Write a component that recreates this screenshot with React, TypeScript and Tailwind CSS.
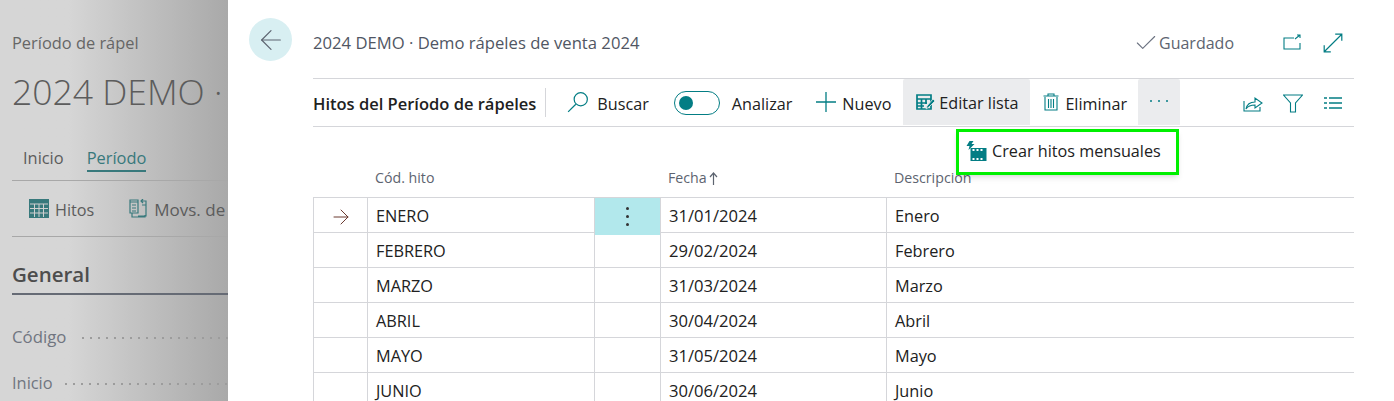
import { ReactNode } from 'react'
import { ArrowLeft, ArrowRight, Check } from 'lucide-react'

const TEAL = '#037d84'

const rows = [
  ['ENERO', '31/01/2024', 'Enero'],
  ['FEBRERO', '29/02/2024', 'Febrero'],
  ['MARZO', '31/03/2024', 'Marzo'],
  ['ABRIL', '30/04/2024', 'Abril'],
  ['MAYO', '31/05/2024', 'Mayo'],
  ['JUNIO', '30/06/2024', 'Junio'],
]

function Icon({ size = 20, children }: { size?: number; children: ReactNode }) {
  return (
    <svg width={size} height={size} viewBox="0 0 20 20" fill="none" stroke={TEAL} strokeWidth="1.1" className="shrink-0">
      {children}
    </svg>
  )
}

function Dots() {
  return <div className="flex-1 h-[4px] mt-[2px] bg-[radial-gradient(circle,#9c9c9c_1px,transparent_1.2px)] bg-[length:8px_4px]" />
}

function Label({ children, className = '' }: { children: ReactNode; className?: string }) {
  return <span className={`pt-[3px] ${className}`}>{children}</span>
}

function LeftPanel() {
  return (
    <div className="w-[228px] h-[401px] shrink-0 overflow-hidden bg-gradient-to-r from-[#d6d6d6] from-30% to-[#a9a9a9] text-[#5c5c5c]">
      <div className="pl-3 pt-[31px] text-[16.4px] leading-[24px] text-[#666]">Período de rápel</div>
      <div className="pl-3 pt-[12px] text-[35.500px] leading-[48px] font-light whitespace-nowrap">2024 DEMO ·</div>
      <div className="ml-3 mt-[24px] h-[42px] flex gap-[23px] pl-[11px] border-b border-[#a8a8a8] text-[16.4px] leading-[38px]">
        <span>Inicio</span>
        <span className="h-[31px] text-[#38797c] border-b-2 border-[#38797c] box-content leading-[38px]">Período</span>
      </div>
      <div className="ml-3 h-[56px] flex items-center gap-[35px] pl-[17px] border-b border-[#a8a8a8] text-[16.2px] whitespace-nowrap">
        <span className="flex items-center gap-[6px]">
          <svg width="20" height="19" viewBox="0 0 20 19" className="shrink-0">
            <rect width="20" height="19" fill="#38797c" />
            <path d="M1 5h18M1 9.500h18M1 14h18M5.500 5v13M10 5v13M14.500 5v13" stroke="#d0d0d0" strokeWidth="1" />
          </svg>
          <Label>Hitos</Label>
        </span>
        <span className="flex items-center gap-[5px] text-[17px]">
          <svg width="20" height="20" viewBox="0 0 20 20" fill="none" stroke="#38797c" strokeWidth="1.200" className="shrink-0">
            <path d="M1 1h8v2H1zM1 3h8v11H1zM3 6h4M3 9h4M3 12h4M3 14v4h13v-2M9 17h8V6h-4M14 0l-2 2 2 2M12 2h5v4" />
          </svg>
          <Label>Movs. de</Label>
        </span>
      </div>
      <div className="ml-3 h-[58px] pt-[21px] border-b-2 border-[#666b75] text-[20.500px] leading-[32px] font-semibold text-[#4d4d4d]">General</div>
      <div className="ml-3 mt-[30px] flex items-center gap-[13px] text-[16.8px] leading-[24px] text-[#707580]">
        <span>Código</span>
        <Dots />
      </div>
      <div className="ml-3 mt-[22px] flex items-center gap-[9px] text-[16.4px] leading-[24px] text-[#707580]">
        <span>Inicio</span>
        <Dots />
      </div>
    </div>
  )
}

function Toolbar() {
  return (
    <div className="relative h-[48px] flex items-center border-b border-[#d5d6da] text-[16.2px] text-[#212121] whitespace-nowrap">
      <span className="font-semibold text-[16.500px] pr-[9px] mr-[21px] h-[29px] leading-[32px] border-r border-[#d5d6da]">Hitos del Período de rápeles</span>
      <span className="flex items-center gap-[8px]">
        <Icon size={22}>
          <circle cx="12.500" cy="7.500" r="6" />
          <path d="M8 12l-7 7" />
        </Icon>
        <Label>Buscar</Label>
      </span>
      <span className="ml-[25px] w-[46px] h-[24px] rounded-full border border-[#037d84] flex items-center pl-[4px]">
        <span className="w-[14px] h-[14px] rounded-full bg-[#037d84]" />
      </span>
      <Label className="ml-[12px]">Analizar</Label>
      <span className="ml-[24px] flex items-center gap-[6px]">
        <Icon>
          <path d="M0 10h20M10 0v20" strokeWidth="1.300" />
        </Icon>
        <Label>Nuevo</Label>
      </span>
      <span className="ml-[12px] h-[46px] w-[127px] rounded-t-[2px] bg-[#ebecee] flex items-center justify-center gap-[4px] mb-[1px]">
        <Icon>
          <path d="M2 3h14v14H2zM2 7h14M2 11h10M2 14h7M6.500 7v10M11 7v5" strokeWidth="1.700" />
          <path d="M11 17l1-3 6-7 2 2-6 6z" fill={TEAL} stroke="#ebecee" strokeWidth="0.800" />
        </Icon>
        <Label>Editar lista</Label>
      </span>
      <span className="ml-[11px] flex items-center gap-[4px]">
        <Icon>
          <path d="M4 5v13h12V5M2.500 4h15M7 4V2h6v2M7.500 7v9M10 7v9M12.500 7v9" />
        </Icon>
        <Label>Eliminar</Label>
      </span>
      <span className="ml-[11px] h-[46px] w-[42px] rounded-t-[2px] bg-[#ebecee] flex items-center justify-center gap-[6px] mb-[1px] pb-[3px]">
        <span className="w-[2px] h-[2px] bg-[#037d84] rounded-full" />
        <span className="w-[2px] h-[2px] bg-[#037d84] rounded-full" />
        <span className="w-[2px] h-[2px] bg-[#037d84] rounded-full" />
      </span>
      <div className="ml-auto flex items-center gap-[20px] pr-[11px]">
        <Icon>
          <path d="M1 8v10h16v-4M3 16c1-5 5-7 9-7V5l7 5-7 5v-3c-4 0-7 1-9 4z" />
        </Icon>
        <Icon>
          <path d="M0.500 2h19l-7 8v9h-5v-9z" />
        </Icon>
        <Icon>
          <path d="M1 5h3M6 5h13M1 10h3M6 10h13M1 15h3M6 15h13" strokeWidth="1.300" />
        </Icon>
      </div>
      <div className="absolute left-[643px] top-[50px] z-10 w-[223px] h-[46px] border-[3px] border-[#00f000] bg-white shadow-md flex items-center pl-[6px] gap-[5px] text-[16.2px] leading-none pb-[1px]">
        <svg width="22" height="21" viewBox="0 0 21 21" className="shrink-0">
          <path d="M4 0h4L6 3h3L3 9l1-4H1z" fill={TEAL} />
          <path d="M5 7h16v13H5z" fill={TEAL} />
          <path d="M7 8h2v2H7zM11 8h2v2h-2zM15 8h2v2h-2zM7 17h2v2H7zM11 17h2v2h-2zM15 17h2v2h-2z" fill="#fff" />
        </svg>
        Crear hitos mensuales
      </div>
    </div>
  )
}

function ListTable() {
  return (
    <div className="text-[16.3px] text-[#212121]">
      <div className="h-[70px] flex items-end pb-[9px] text-[14.2px] leading-[20px] text-[#5d6470]">
        <div className="w-[62px]" />
        <div className="w-[293px]">Cód. hito</div>
        <div className="w-[226px] flex items-center gap-[2px]">
          Fecha
          <svg width="9" height="13" viewBox="0 0 9 13" fill="none" stroke="#5d6470" strokeWidth="1.200">
            <path d="M4.500 13V1M1 5l3.500-4L8 5" />
          </svg>
        </div>
        <div>Descripcion</div>
      </div>
      <div className="border-t border-[#d5d6da]">
        {rows.map((r, i) => (
          <div key={r[0]} className="h-[35px] grid grid-cols-[55px_227px_66px_226px_1fr] border-b border-[#d5d6da]">
            <div className="border-l border-r border-[#d5d6da] flex items-center justify-center">
              {i === 0 && <ArrowRight size={24} color="#6b3a30" strokeWidth={1} />}
            </div>
            <div className="border-r border-[#d5d6da] pl-[8px] leading-[37px]">{r[0]}</div>
            <div className={`border-r border-[#d5d6da] flex flex-col items-center justify-center gap-[5px] ${i === 0 ? 'bg-[#b2e8ec]' : ''}`}>
              {i === 0 && (
                <>
                  <span className="w-[3px] h-[3px] rounded-full bg-[#333]" />
                  <span className="w-[3px] h-[3px] rounded-full bg-[#333]" />
                  <span className="w-[3px] h-[3px] rounded-full bg-[#333]" />
                </>
              )}
            </div>
            <div className="border-r border-[#d5d6da] pl-[8px] leading-[36px] text-[16.6px]">{r[1]}</div>
            <div className="pl-[8px] leading-[37px]">{r[2]}</div>
          </div>
        ))}
      </div>
    </div>
  )
}

export default function App() {
  return (
    <div className="w-[1394px] h-[401px] overflow-hidden flex bg-white font-['Open_Sans','Noto_Sans',sans-serif]">
      <LeftPanel />
      <div className="flex-1 flex">
        <div className="w-[85px] shrink-0 pl-[21px] pt-[18px]">
          <div className="w-[43px] h-[43px] rounded-full bg-[#d8eff2] flex items-center justify-center">
            <ArrowLeft size={32} color="#5d6470" strokeWidth={0.9} />
          </div>
        </div>
        <div className="w-[1041px]">
          <div className="h-[79px] flex items-center border-b border-[#d5d6da] pt-[8px]">
            <span className="text-[16.650px] text-[#505663]">2024 DEMO · Demo rápeles de venta 2024</span>
            <div className="ml-auto flex items-center pr-[10px]">
              <Check size={26} color="#6b7280" strokeWidth={1} />
              <span className="text-[16px] text-[#5d6470] mr-[48px]">Guardado</span>
              <Icon>
                <path d="M18 10v6H2V5h10M13 6l5-4M15 2h3v3" />
              </Icon>
              <span className="w-[20px]" />
              <Icon size={22}>
                <path d="M2 18L18 2M12 2h6v6M2 12v6h6" />
              </Icon>
            </div>
          </div>
          <Toolbar />
          <ListTable />
        </div>
      </div>
    </div>
  )
}
